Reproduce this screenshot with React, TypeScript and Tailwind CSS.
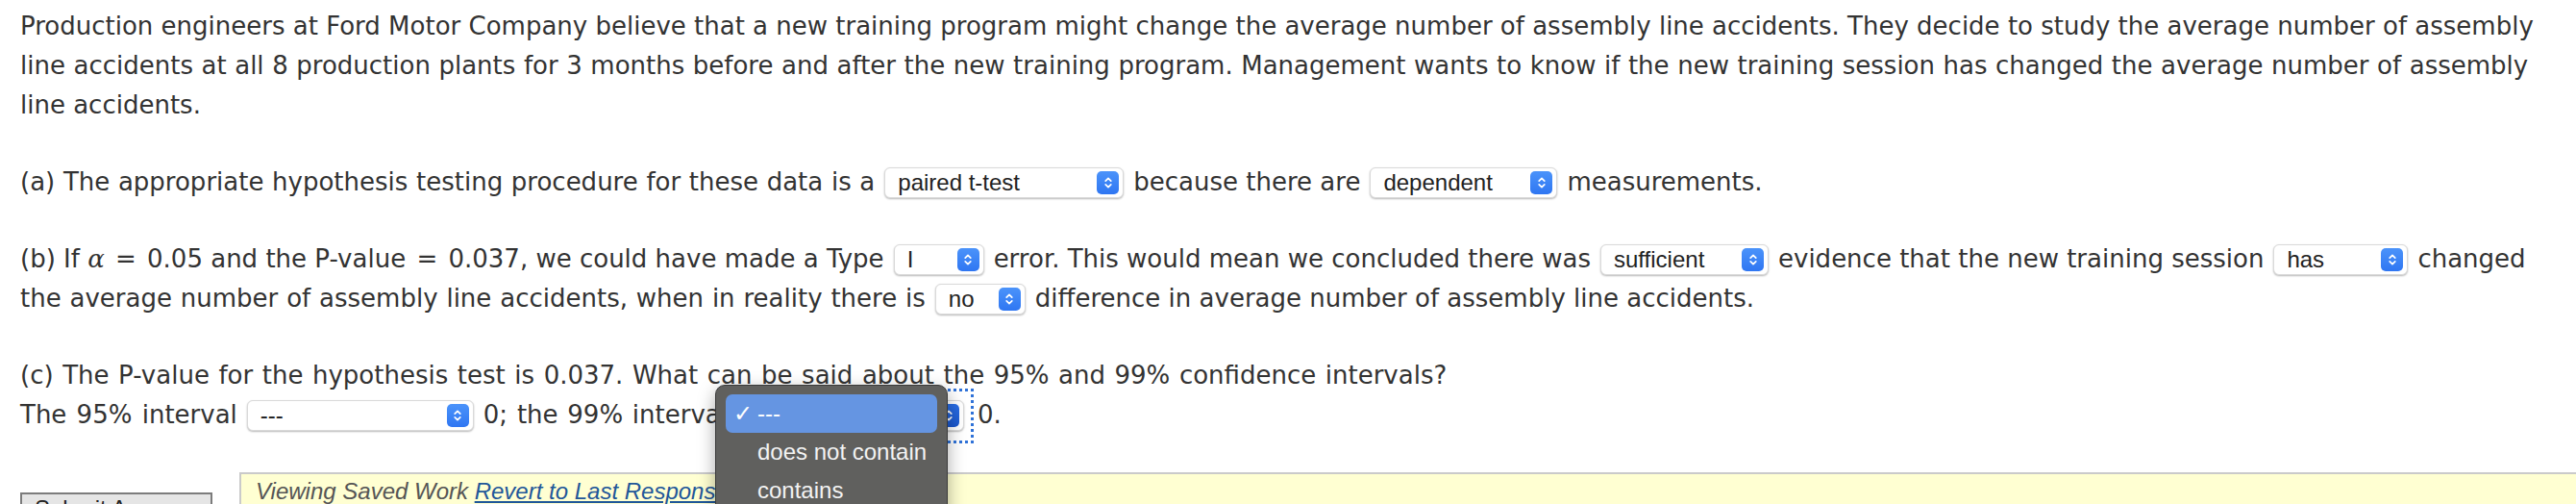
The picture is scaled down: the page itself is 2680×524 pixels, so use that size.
import React from "react";

function Chevron({ dark }: { dark?: boolean }) {
  return (
    <span
      className={
        dark
          ? "flex h-[24px] w-[23px] items-center justify-center rounded-[5px] bg-gradient-to-b from-[#2a6ee6] to-[#1a56cc]"
          : "flex h-[24px] w-[23px] items-center justify-center rounded-[5px] bg-gradient-to-b from-[#4b93fa] to-[#2f76f2]"
      }
    >
      <svg width="10" height="16" viewBox="0 0 10 16" fill="none" stroke="white" strokeWidth="1.7" strokeLinecap="round" strokeLinejoin="round">
        <path d="M2.2 6.2 L5 3.4 L7.8 6.2" />
        <path d="M2.2 9.8 L5 12.6 L7.8 9.8" />
      </svg>
    </span>
  );
}

function Select({ value, cls, dark, focus }: { value: string; cls: string; dark?: boolean; focus?: boolean }) {
  return (
    <span
      className={
        "relative flex h-[32px] shrink-0 items-center justify-between rounded-[6px] border border-[#d9d9d9] bg-white pl-[13px] pr-[4px] font-['Liberation_Sans'] text-[24px] text-[#222] shadow-[0_1px_2px_rgba(0,0,0,0.28)] " +
        cls
      }
    >
      <span className="leading-none">{value}</span>
      <Chevron dark={dark} />
      {focus && (
        <span className="pointer-events-none absolute -bottom-[14px] -left-[11px] -right-[11px] -top-[13px] border-[3px] border-dotted border-[#2f72d8]" />
      )}
    </span>
  );
}

const row = "flex h-[41px] items-center gap-[10px] whitespace-nowrap";

export default function App() {
  return (
    <div className="relative h-[524px] w-[2680px] overflow-hidden bg-white font-['DejaVu_Sans',Verdana,sans-serif] text-[26px] text-[#333]">
      <div className="pl-[21px] pt-[7px]">
        <div className={row}>
          <span>
            Production engineers at Ford Motor Company believe that a new training program might change the average number of assembly line accidents. They decide to study the average number of assembly
          </span>
        </div>
        <div className={row}>
          <span className="[word-spacing:0.3px]">
            line accidents at all 8 production plants for 3 months before and after the new training program. Management wants to know if the new training session has changed the average number of assembly
          </span>
        </div>
        <div className={row}>
          <span>line accidents.</span>
        </div>

        <div className={row + " mt-[39px]"}>
          <span className="[word-spacing:0.4px]">(a) The appropriate hypothesis testing procedure for these data is a</span>
          <Select value="paired t-test" cls="w-[249px]" />
          <span>because there are</span>
          <Select value="dependent" cls="w-[195px]" />
          <span>measurements.</span>
        </div>

        <div className={row + " mt-[39px]"}>
          <span>
            (b) If <i className="font-['DejaVu_Serif',serif]">α</i> <span className="px-[3px]">=</span> 0.05 and the P-value <span className="px-[3px]">=</span> 0.037, we could have made a Type
          </span>
          <Select value="I" cls="w-[94px]" />
          <span>error. This would mean we concluded there was</span>
          <Select value="sufficient" cls="w-[175px]" />
          <span>evidence that the new training session</span>
          <Select value="has" cls="w-[140px]" />
          <span>changed</span>
        </div>
        <div className={row}>
          <span className="[word-spacing:0.6px]">the average number of assembly line accidents, when in reality there is</span>
          <Select value="no" cls="w-[94px]" />
          <span>difference in average number of assembly line accidents.</span>
        </div>

        <div className={row + " mt-[39px]"}>
          <span className="[word-spacing:1.3px]">(c) The P-value for the hypothesis test is 0.037. What can be said about the 95% and 99% confidence intervals?</span>
        </div>
        <div className={row}>
          <span className="[word-spacing:2px]">The 95% interval</span>
          <Select value="---" cls="w-[236px]" />
          <span className="[word-spacing:1.5px]">0; the 99% interval</span>
          <Select value="---" cls="w-[236px]" dark focus />
          <span className="ml-[4px]">0.</span>
        </div>

        <div className="mt-[39px] flex items-start">
          <div className="mt-[21px] h-[50px] w-[200px] shrink-0 border-2 border-[#7c7c7c] bg-[#e5e5e5] pl-[13px] pt-[3px] font-['Liberation_Sans'] text-[24px] leading-[24px] text-[#222]">
            Submit Answer
          </div>
          <div className="ml-[28px] h-[60px] flex-1 border-l-2 border-t-2 border-[#cacaca] bg-[#ffffd2] pl-[15px] pt-[3px] font-['Liberation_Sans'] text-[24px] leading-[30px] italic text-[#555]">
            Viewing Saved Work <span className="text-[#1f5799] underline">Revert to Last Response</span>
          </div>
        </div>
      </div>

      <div className="absolute left-[744px] top-[400px] z-10 h-[170px] w-[242px] rounded-[10px] border border-[#3a3a3a] bg-[#60605e] px-[10px] pt-[9px] font-['Liberation_Sans'] text-[24px] text-[#f3f3f3] shadow-[0_6px_18px_rgba(0,0,0,0.35)]">
        <div className="flex h-[40px] items-center rounded-[7px] bg-[#6595e2] pl-[8px] text-white">
          <span className="w-[25px] font-['DejaVu_Sans']">✓</span>
          <span>---</span>
        </div>
        <div className="flex h-[40px] items-center pl-[33px]">does not contain</div>
        <div className="flex h-[40px] items-center pl-[33px]">contains</div>
      </div>
    </div>
  );
}
